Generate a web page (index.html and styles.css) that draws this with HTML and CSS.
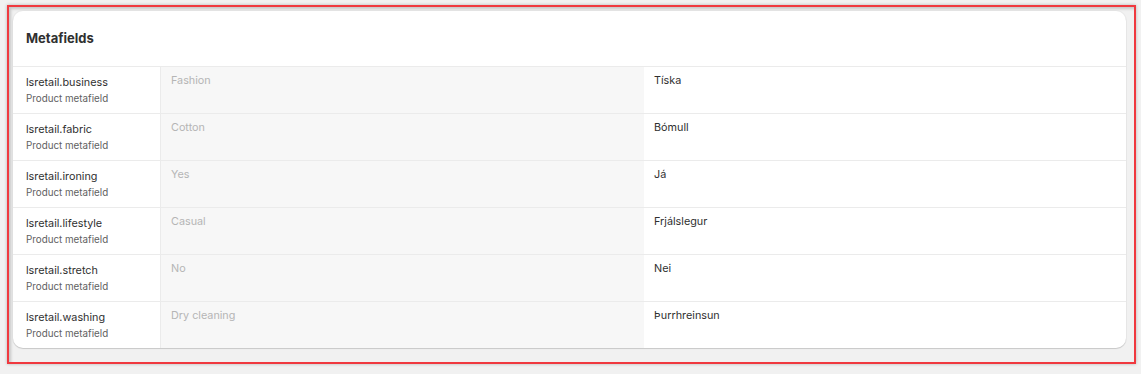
FILE: index.html
```html
<!DOCTYPE html>
<html lang="en">
<head>
<meta charset="utf-8">
<title>Metafields</title>
<link rel="stylesheet" href="styles.css">
</head>
<body>
<div class="frame">
  <section class="card">
    <header class="card-head">
      <h2 class="card-title">Metafields</h2>
    </header>
    <div class="table">
      <div class="row">
        <div class="key"><span class="key-name">lsretail.business</span><span class="key-type">Product metafield</span></div>
        <div class="source">Fashion</div>
        <div class="target">Tíska</div>
      </div>
      <div class="row">
        <div class="key"><span class="key-name">lsretail.fabric</span><span class="key-type">Product metafield</span></div>
        <div class="source">Cotton</div>
        <div class="target">Bómull</div>
      </div>
      <div class="row">
        <div class="key"><span class="key-name">lsretail.ironing</span><span class="key-type">Product metafield</span></div>
        <div class="source">Yes</div>
        <div class="target">Já</div>
      </div>
      <div class="row">
        <div class="key"><span class="key-name">lsretail.lifestyle</span><span class="key-type">Product metafield</span></div>
        <div class="source">Casual</div>
        <div class="target">Frjálslegur</div>
      </div>
      <div class="row">
        <div class="key"><span class="key-name">lsretail.stretch</span><span class="key-type">Product metafield</span></div>
        <div class="source">No</div>
        <div class="target">Nei</div>
      </div>
      <div class="row">
        <div class="key"><span class="key-name">lsretail.washing</span><span class="key-type">Product metafield</span></div>
        <div class="source">Dry cleaning</div>
        <div class="target">Þurrhreinsun</div>
      </div>
    </div>
  </section>
</div>
</body>
</html>
```
FILE: styles.css
```css
* { box-sizing: border-box; }

html, body {
  margin: 0;
  padding: 0;
  background: #f1f1f1;
  font-family: Inter, "Noto Sans", "Liberation Sans", sans-serif;
  color: #303030;
}

body {
  padding: 5px 5px 0 7px;
  height: 374px;
}

.frame {
  width: 1129px;
  height: 359px;
  border: 2px solid #f0393f;
  padding: 4px 8px 0 4px;
  box-shadow: 0 0 3px rgba(0, 0, 0, 0.25), inset 2px 2px 3px rgba(0, 0, 0, 0.18);
  background: #f1f1f1;
}

.card {
  background: #ffffff;
  border-radius: 10px;
  overflow: hidden;
  box-shadow: 0 1px 1px rgba(0, 0, 0, 0.14), 0 0 0 1px rgba(0, 0, 0, 0.03);
}

.card-head {
  height: 56px;
  display: flex;
  align-items: center;
  padding: 0 13px 1px;
  border-bottom: 1px solid #ebebeb;
}

.card-title {
  margin: 0;
  font-size: 13px;
  font-weight: 650;
  color: #303030;
}

.row {
  display: grid;
  grid-template-columns: 148px 483px 1fr;
  height: 47px;
  border-bottom: 1px solid #ebebeb;
}

.row:last-child { border-bottom: 0; height: 46px; }

.key {
  display: flex;
  flex-direction: column;
  padding: 7px 13px 0;
  border-right: 1px solid #ebebeb;
}

.key-name {
  font-size: 10.8px;
  line-height: 17px;
  color: #303030;
}

.key-type {
  font-size: 9.8px;
  line-height: 16px;
  color: #616161;
}

.source {
  background: #f7f7f7;
  padding: 5px 10px 0;
  font-size: 10.8px;
  line-height: 17px;
  color: #b5b5b5;
}

.target {
  padding: 5px 10px 0;
  font-size: 10.8px;
  line-height: 17px;
  color: #303030;
}
```
